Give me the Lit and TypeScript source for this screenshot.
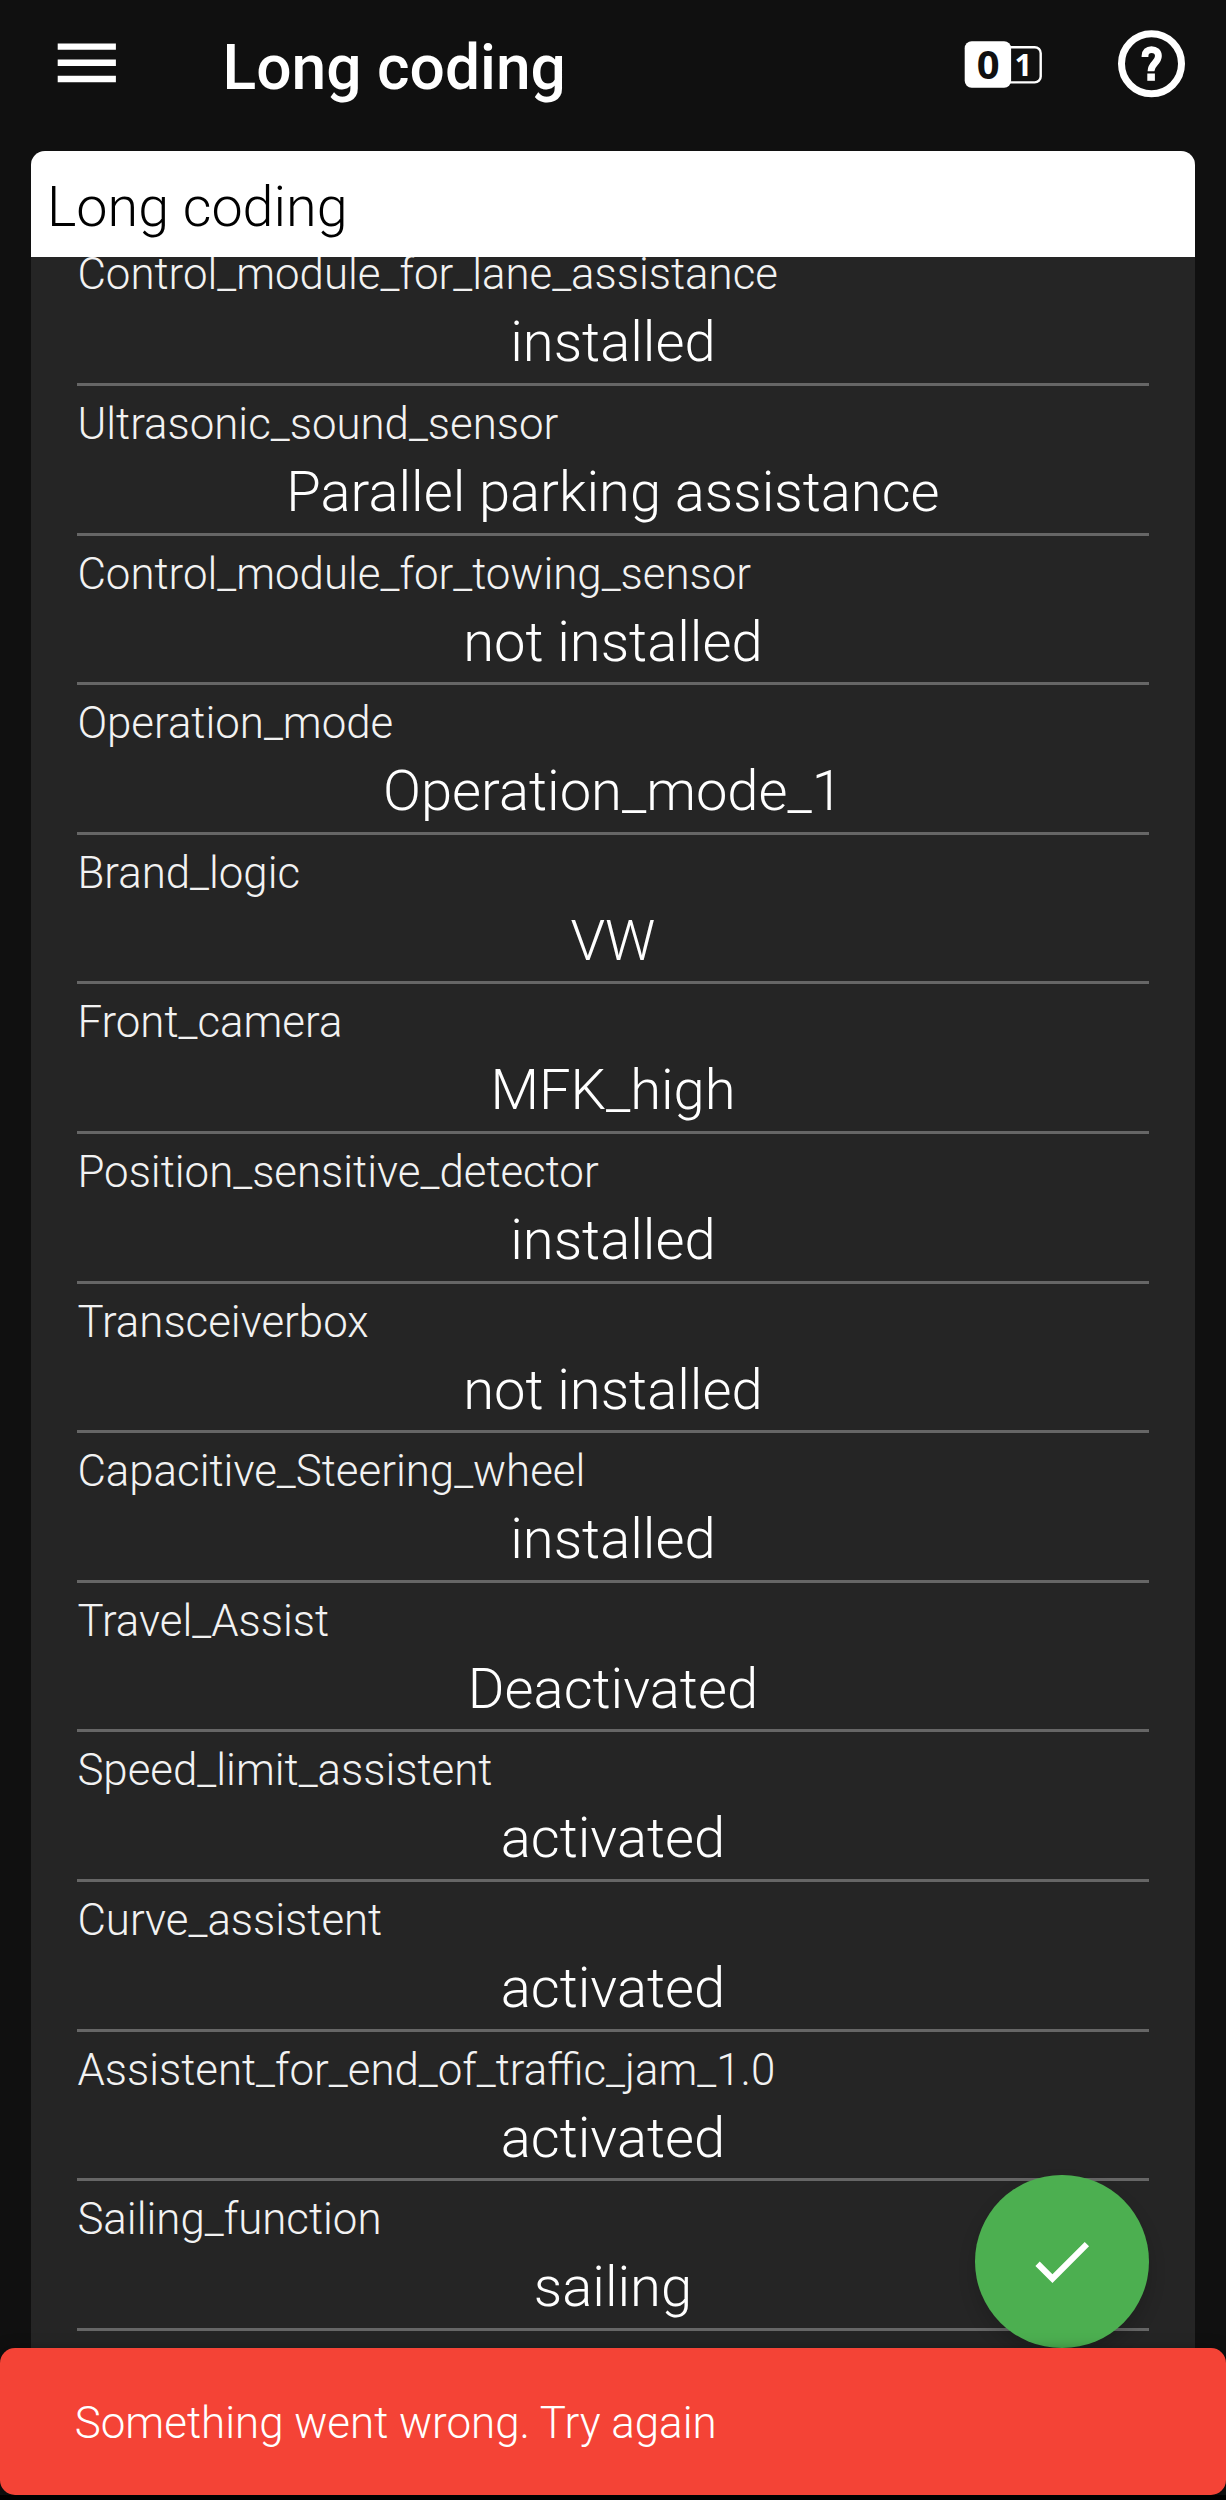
import { LitElement, html, css } from "lit";
import { customElement, property } from "lit/decorators.js";

interface CodingEntry {
  name: string;
  value: string;
}

const ENTRIES: CodingEntry[] = [
  { name: "Control_module_for_lane_assistance", value: "installed" },
  { name: "Ultrasonic_sound_sensor", value: "Parallel parking assistance" },
  { name: "Control_module_for_towing_sensor", value: "not installed" },
  { name: "Operation_mode", value: "Operation_mode_1" },
  { name: "Brand_logic", value: "VW" },
  { name: "Front_camera", value: "MFK_high" },
  { name: "Position_sensitive_detector", value: "installed" },
  { name: "Transceiverbox", value: "not installed" },
  { name: "Capacitive_Steering_wheel", value: "installed" },
  { name: "Travel_Assist", value: "Deactivated" },
  { name: "Speed_limit_assistent", value: "activated" },
  { name: "Curve_assistent", value: "activated" },
  { name: "Assistent_for_end_of_traffic_jam_1.0", value: "activated" },
  { name: "Sailing_function", value: "sailing" },
];

@customElement("app-toolbar")
export class AppToolbar extends LitElement {
  @property() heading = "";

  static styles = css`
    :host {
      display: flex;
      align-items: flex-start;
      height: 151px;
      box-sizing: border-box;
      padding: 0 41px 0 48px;
      color: #fff;
    }
    svg {
      display: block;
      flex: none;
    }
    .menu {
      margin-top: 24px;
    }
    .title {
      margin: 28px 0 0 97px;
      font-size: 62.3px;
      line-height: 79px;
      font-weight: 500;
      flex: 1;
      white-space: nowrap;
    }
    .bits {
      margin: 31px 76px 0 0;
    }
    .help {
      margin-top: 30px;
    }
    .digit {
      font-family: "Open Sans", "Noto Sans", sans-serif;
      font-weight: 700;
    }
  `;

  render() {
    return html`
      <svg class="menu" width="77.6" height="77.6" viewBox="0 0 24 24" fill="#fff">
        <path d="M3 18h18v-2H3v2zm0-5h18v-2H3v2zm0-7v2h18V6H3z" />
      </svg>
      <div class="title">${this.heading}</div>
      <svg class="bits" width="78" height="67" viewBox="-0.7 -10.2 78 67">
        <rect x="30" y="6" width="46" height="35.2" rx="6" fill="none" stroke="#fff" stroke-width="2.4" />
        <rect x="0" y="0" width="46.4" height="46.6" rx="7" fill="#fff" />
        <text class="digit" x="23.6" y="38" font-size="40" text-anchor="middle" fill="#101010">0</text>
        <text class="digit" x="58.8" y="34.6" font-size="31" text-anchor="middle" fill="#fff">1</text>
      </svg>
      <svg class="help" width="67" height="68" viewBox="1118 30.5 67 68" fill="none" stroke="#fff">
        <circle cx="1151.5" cy="64.3" r="30" stroke-width="7" />
        <path
          d="M1145 57.6V56.5C1145 52.5 1147.6 50.1 1151.5 50.1C1155.6 50.1 1158.4 52.6 1158.4 56.6C1158.4 63.5 1151 64 1151 71.7"
          stroke-width="6.8"
        />
        <rect x="1147.3" y="74" width="7.6" height="7.3" fill="#fff" stroke="none" />
      </svg>
    `;
  }
}

@customElement("coding-row")
export class CodingRow extends LitElement {
  @property() name = "";
  @property() value = "";

  static styles = css`
    :host {
      display: flex;
      flex-direction: column;
      flex: none;
      height: 149.6px;
      white-space: nowrap;
    }
    .name {
      font-size: 43.8px;
      line-height: 76px;
      color: #f2f2f2;
    }
    .value {
      font-size: 56.1px;
      line-height: 60px;
      text-align: center;
      color: #fff;
    }
    .rule {
      height: 3px;
      margin-top: auto;
      background: #666;
    }
  `;

  render() {
    return html`
      <div class="name">${this.name}</div>
      <div class="value">${this.value}</div>
      <div class="rule"></div>
    `;
  }
}

@customElement("app-root")
export class AppRoot extends LitElement {
  static styles = css`
    :host {
      display: block;
    }
    .screen {
      position: relative;
      display: flex;
      flex-direction: column;
      height: 2500px;
      background: #101010;
      font-family: Roboto, "Liberation Sans", sans-serif;
      font-weight: 300;
      overflow: hidden;
    }
    .panel {
      display: flex;
      flex-direction: column;
      flex: 1;
      min-height: 0;
      margin: 0 31px;
      background: #252525;
      border-radius: 14px 14px 0 0;
      overflow: hidden;
    }
    .caption {
      position: relative;
      flex: none;
      height: 106px;
      box-sizing: border-box;
      padding-left: 16px;
      background: #fff;
      color: #000;
      font-size: 55.7px;
      line-height: 112px;
    }
    .list {
      display: flex;
      flex-direction: column;
      flex: 1;
      min-height: 0;
      padding: 0 46.5px 0 46.4px;
    }
    .rows {
      display: flex;
      flex-direction: column;
      margin-top: -20.6px;
    }
    .snackbar {
      flex: none;
      height: 147px;
      box-sizing: border-box;
      padding-left: 74.7px;
      border-radius: 15px;
      background: #f44336;
      color: #fff;
      font-size: 43.9px;
      line-height: 150px;
      box-shadow: 0 4px 16px rgba(0, 0, 0, 0.5);
    }
    .navbar {
      flex: none;
      height: 5.5px;
      background: #000;
    }
    .fab {
      position: absolute;
      left: 975px;
      top: 2174.5px;
      width: 173.5px;
      height: 173.5px;
      display: flex;
      align-items: center;
      justify-content: center;
      border-radius: 50%;
      background: #4caf50;
      box-shadow: 0 10px 18px rgba(0, 0, 0, 0.16);
    }
    .bottom {
      position: relative;
      z-index: 1;
      display: flex;
      flex-direction: column;
      flex: none;
    }
  `;

  render() {
    return html`
      <div class="screen">
        <app-toolbar heading="Long coding"></app-toolbar>
        <div class="panel">
          <div class="caption">Long coding</div>
          <div class="list">
            <div class="rows">
              ${ENTRIES.map((e) => html`<coding-row .name=${e.name} .value=${e.value}></coding-row>`)}
            </div>
          </div>
        </div>
        <div class="fab">
          <svg width="73.2" height="73.2" viewBox="0 0 24 24" fill="#fff">
            <path d="M9 16.17L4.83 12l-1.42 1.41L9 19 21 7l-1.41-1.41z" />
          </svg>
        </div>
        <div class="bottom">
          <div class="snackbar">Something went wrong. Try again</div>
          <div class="navbar"></div>
        </div>
      </div>
    `;
  }
}
